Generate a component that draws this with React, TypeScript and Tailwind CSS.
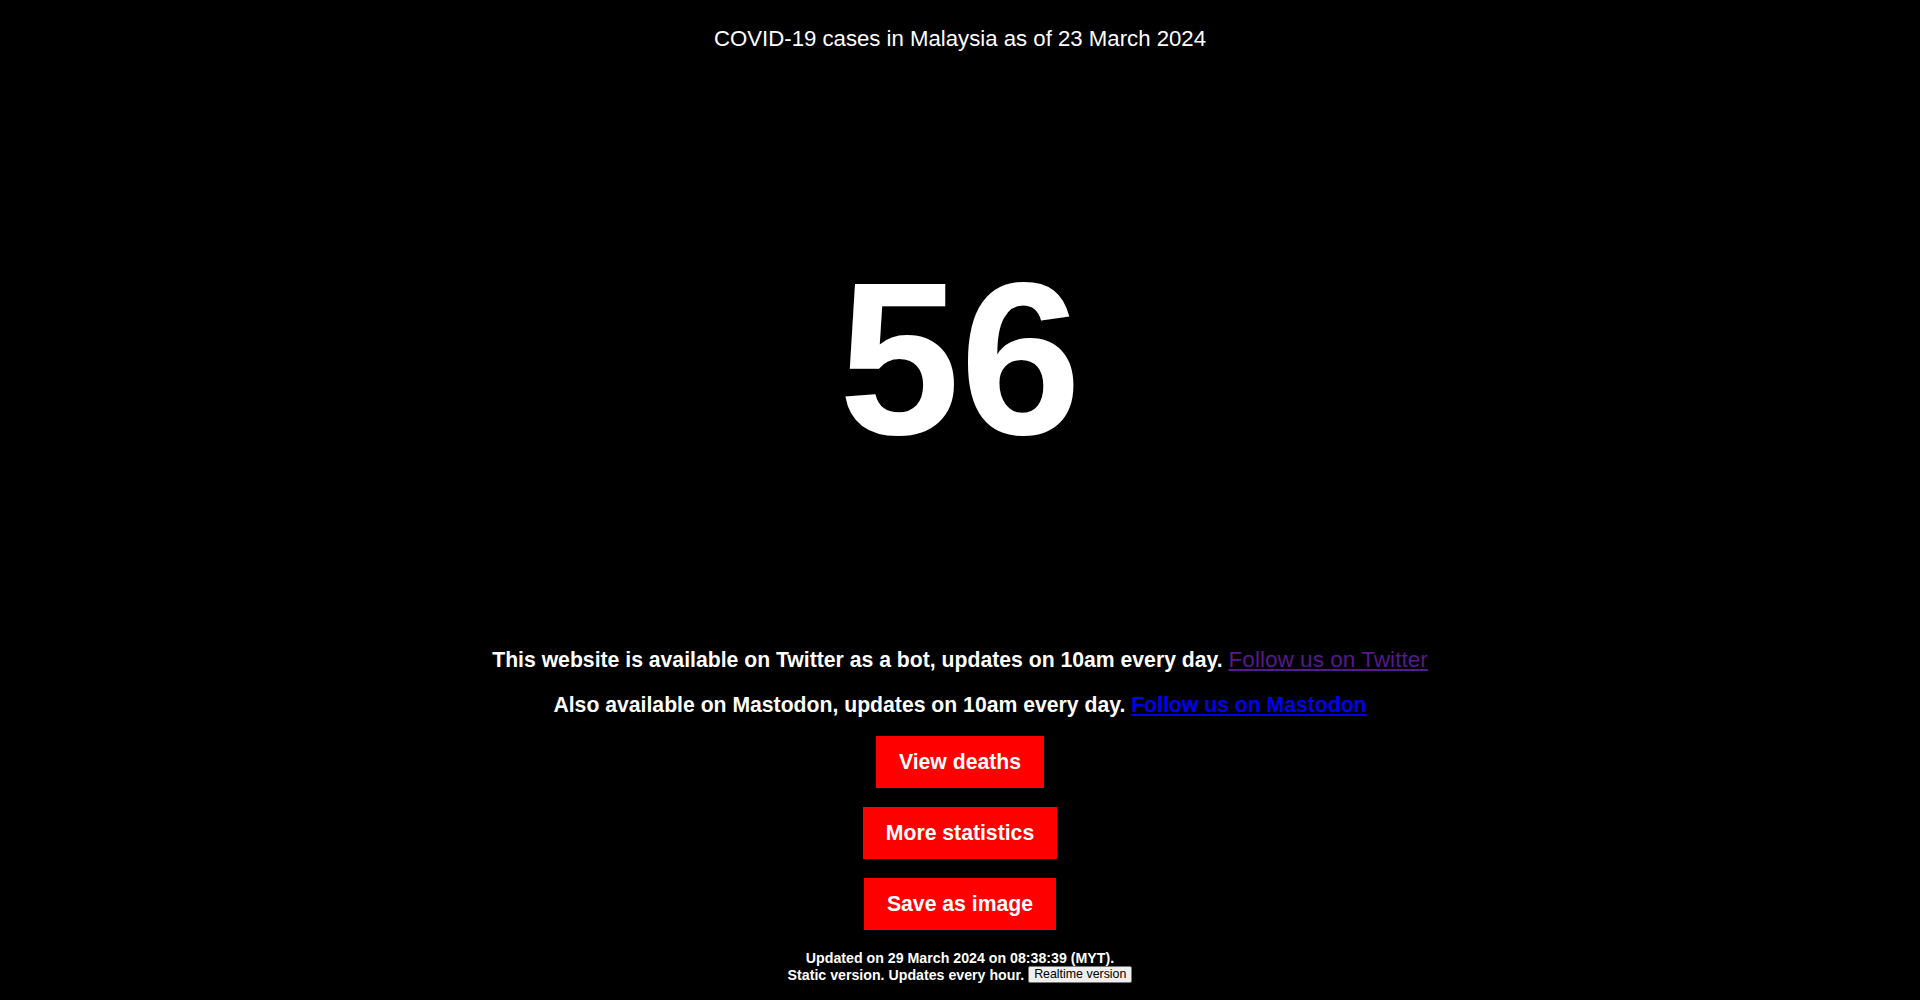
export default function App() {
  return (
    <div className="h-screen bg-black text-white flex flex-col items-center font-['Liberation_Sans',Arial,sans-serif]">
      <h1 className="mt-[26px] text-[22.2px] leading-[26px] font-normal">COVID-19 cases in Malaysia as of 23 March 2024</h1>

      <div className="flex-1 flex items-center justify-center pt-[17px]">
        <div className="text-[218px] leading-[218px] font-bold">56</div>
      </div>

      <div className="flex flex-col items-center text-[21.2px] font-bold">
        <p className="leading-[24px]">
          This website is available on Twitter as a bot, updates on 10am every day.{' '}
          <a href="#" className="font-normal text-[22.6px] text-[#551a8b] underline">Follow us on Twitter</a>
        </p>
        <p className="mt-[21px] leading-[24px]">
          Also available on Mastodon, updates on 10am every day.{' '}
          <a href="#" className="text-[#0000ee] underline">Follow us on Mastodon</a>
        </p>

        <div className="mt-[19px] flex flex-col items-center gap-[19px]">
          <Button label="View deaths" />
          <Button label="More statistics" />
          <Button label="Save as image" />
        </div>
      </div>

      <div className="mt-[20px] mb-[17px] flex flex-col items-center text-[14.2px] font-bold leading-[16px]">
        <p>Updated on 29 March 2024 on 08:38:39 (MYT).</p>
        <div className="flex items-center gap-[4px]">
          <span>Static version. Updates every hour.</span>
          <button className="font-normal text-[12.4px] leading-[13px] text-black bg-[#efefef] border border-[#767676] px-[5px] py-[1px] rounded-[2px]">
            Realtime version
          </button>
        </div>
      </div>
    </div>
  );
}

function Button({ label }: { label: string }) {
  return (
    <button className="bg-[#ff0000] text-white text-[21.2px] leading-[24px] font-bold h-[52px] px-[23px]">
      {label}
    </button>
  );
}
